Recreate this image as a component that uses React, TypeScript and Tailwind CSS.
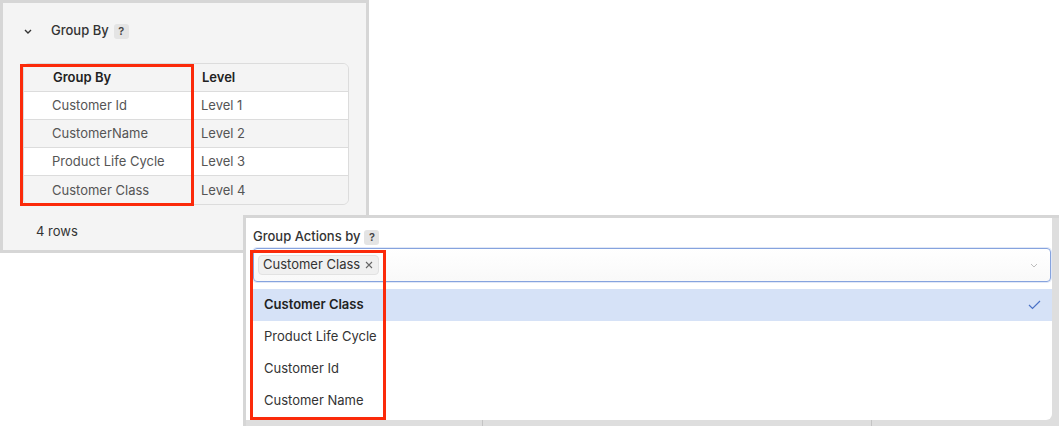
import React from 'react'

const tableRows = [
  { name: 'Customer Id', level: 'Level 1' },
  { name: 'CustomerName', level: 'Level 2' },
  { name: 'Product Life Cycle', level: 'Level 3' },
  { name: 'Customer Class', level: 'Level 4' },
]

const options = ['Customer Class', 'Product Life Cycle', 'Customer Id', 'Customer Name']

function HelpBadge() {
  return (
    <span className="flex h-[15px] w-[15px] items-center justify-center rounded-[3px] bg-[#e4e4e4] text-[11px] leading-none font-semibold text-[#444]">
      ?
    </span>
  )
}

function GroupByPanel() {
  return (
    <div className="absolute left-0 top-0 h-[253px] w-[369px] border-[3px] border-[#d6d6d6] bg-[#f4f4f4]">
      <div className="mt-[17px] flex h-[22px] items-center pl-[21px]">
        <svg width="8" height="5" viewBox="0 0 8 5" className="text-[#333]">
          <polyline points="1,1 4,4 7,1" fill="none" stroke="currentColor" strokeWidth="1.4" />
        </svg>
        <span className="ml-[19px] text-[13px] font-medium text-[#333]">Group By</span>
        <div className="ml-[5px] flex">
          <HelpBadge />
        </div>
      </div>

      <div className="relative ml-[20px] mt-[21px] w-[326px] overflow-hidden rounded-[6px] border border-[#dcdcdc]">
        <div className="flex h-[28px] items-center border-b border-[#dcdcdc] bg-[#f4f4f4] text-[13px] font-semibold text-[#222]">
          <div className="flex h-full w-[169px] items-center border-r border-[#dcdcdc] pl-[29px]">Group By</div>
          <div className="pl-[9px]">Level</div>
        </div>
        {tableRows.map((row, i) => (
          <div
            key={row.name}
            className={`flex h-[28px] items-center pt-px text-[13px] text-[#555] ${i % 2 === 0 ? 'bg-white' : 'bg-[#f4f4f4]'} ${i < tableRows.length - 1 ? 'border-b border-[#dcdcdc]' : ''}`}
          >
            <div className="flex h-full w-[169px] items-center border-r border-[#dcdcdc] pl-[28px]">{row.name}</div>
            <div className="pl-[8px]">{row.level}</div>
          </div>
        ))}
      </div>

      <div className="mt-[17px] pl-[33px] text-[13px] text-[#333]">4 rows</div>

      {/* highlight box */}
      <div className="absolute left-[17px] top-[61px] h-[142px] w-[174px] border-[3px] border-[#fb2a0a]" />
    </div>
  )
}

function GroupActionsPanel() {
  return (
    <div className="absolute left-[243px] top-[215px] h-[211px] w-[816px] border-l-[3px] border-t-[3px] border-[#d6d6d6] bg-[#dedede]">
      <div className="relative h-[202px] w-[806px] rounded-br-[6px] bg-white">
        <div className="box-content flex h-[16px] items-center pl-[7px] pt-[11px]">
          <span className="text-[13px] font-medium text-[#333]">Group Actions by</span>
          <div className="ml-[4px] flex">
            <HelpBadge />
          </div>
        </div>

        <div className="ml-[7px] mt-[3px] flex h-[34px] w-[798px] items-center rounded-[4px] border border-[#86a3de] bg-gradient-to-b from-white to-[#f9f9f9] pl-[4px] pr-[12px] shadow-[0_0_0_1px_rgba(134,163,222,0.25)]">
          <span className="flex h-[20px] items-center rounded-[4px] border border-[#e2e2e2] bg-[#f0f0f0] pl-[4px] pr-[5px] text-[13px] text-[#333]">
            Customer Class
            <svg width="8" height="8" viewBox="0 0 8 8" className="ml-[5px] text-[#666]">
              <path d="M1 1L7 7M7 1L1 7" stroke="currentColor" strokeWidth="1.1" />
            </svg>
          </span>
          <svg width="8" height="5" viewBox="0 0 8 5" className="ml-auto text-[#bdbdbd]">
            <polyline points="1,1 4,4 7,1" fill="none" stroke="currentColor" strokeWidth="1" />
          </svg>
        </div>

        <div className="ml-[7px] mt-[7px] w-[799px]">
          {options.map((opt, i) => (
            <div
              key={opt}
              className={`flex h-[32px] items-center pl-[11px] pr-[11px] text-[13px] ${i === 0 ? 'bg-[#d6e2f7] font-semibold text-[#222]' : 'text-[#333]'}`}
            >
              {opt}
              {i === 0 && (
                <svg width="13" height="10" viewBox="0 0 13 10" className="ml-auto text-[#4b72c6]">
                  <polyline points="1,5 4.5,8.5 12,1" fill="none" stroke="currentColor" strokeWidth="1.2" />
                </svg>
              )}
            </div>
          ))}
        </div>

        {/* highlight box */}
        <div className="absolute left-[4px] top-[32px] h-[170px] w-[136px] border-[3px] border-[#fb2a0a]" />
      </div>
      <div className="relative h-[6px] w-full">
        <div className="absolute left-[236px] top-0 h-[6px] w-px bg-[#c4c4c4]" />
        <div className="absolute left-[625px] top-0 h-[6px] w-px bg-[#c4c4c4]" />
      </div>
    </div>
  )
}

export default function App() {
  return (
    <div className="relative h-[426px] w-[1059px] overflow-hidden bg-white font-['Inter',sans-serif]">
      <GroupByPanel />
      <GroupActionsPanel />
    </div>
  )
}
